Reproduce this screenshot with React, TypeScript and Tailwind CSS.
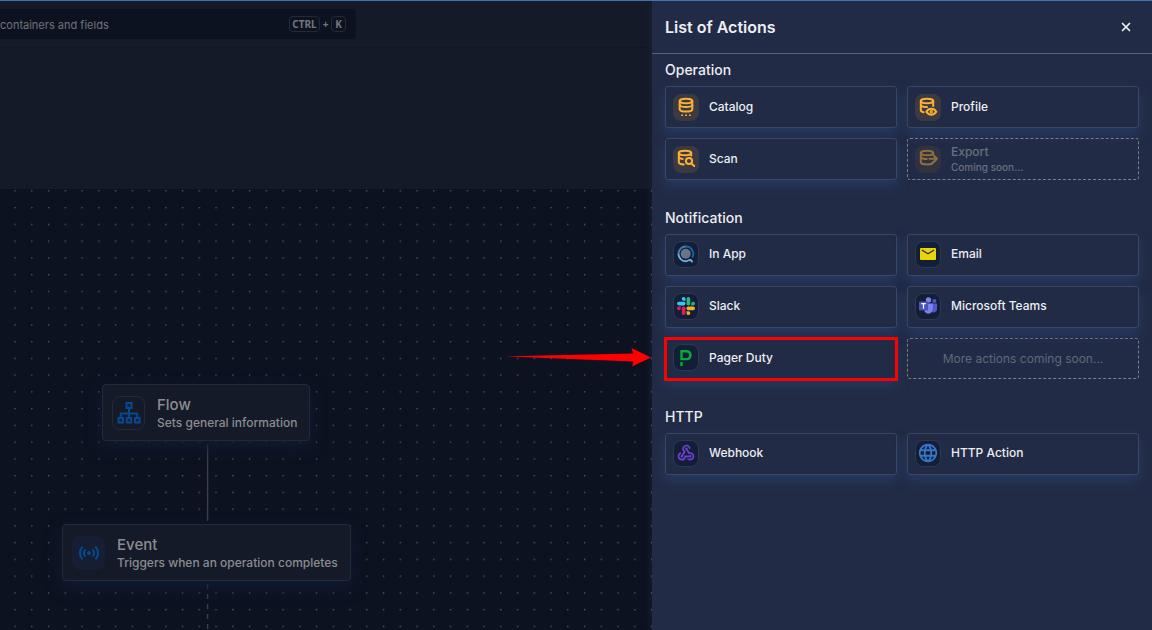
import type { ReactNode } from 'react';
import { X } from 'lucide-react';
import { MdLanguage, MdSensors, MdWebhook } from 'react-icons/md';

function DatabaseIcon({ kind }: { kind: 'catalog' | 'profile' | 'scan' | 'export' }) {
  return (
    <svg viewBox="0 0 20 20" className="h-5 w-5" fill="none" stroke="currentColor" strokeWidth="2" strokeLinecap="round" strokeLinejoin="round" aria-hidden="true">
      {kind === 'catalog' && (
        <>
          <ellipse cx="10" cy="4" rx="6.300" ry="2.300" />
          <path d="M3.700 4v8.200c0 1.400 2.800 2.400 6.300 2.400s6.300-1 6.300-2.400V4" />
          <path d="M3.700 8c.6 1.500 3.300 2.100 6.300 2.100S15.700 9.500 16.300 8" />
          <path d="M6 18.200h.3M9.900 18.200h.3M13.800 18.200h.3" strokeLinecap="square" strokeWidth="1.500" />
        </>
      )}
      {kind === 'profile' && (
        <>
          <ellipse cx="9" cy="4" rx="6.200" ry="2.300" />
          <path d="M2.800 4v9c0 1.100 1 1.900 2.800 2.300M2.800 8.200c1 1.300 3.500 1.900 6.200 1.900M15.200 4v5" />
          <path d="M8.300 14.800c1.300-2.100 3-3 5-3s3.700.9 5 3c-1.300 2-3 2.900-5 2.900s-3.700-.9-5-2.900z" />
          <circle cx="13.300" cy="14.800" r=".7" />
        </>
      )}
      {kind === 'scan' && (
        <>
          <ellipse cx="9" cy="4" rx="6.200" ry="2.300" />
          <path d="M2.800 4v9c0 1.300 2 2.300 5 2.500M2.800 8.200c.9 1.200 2.200 1.700 3.800 1.900M15.200 4v2.500" />
          <circle cx="13" cy="12" r="3.100" />
          <path d="m15.400 14.400 2.800 2.600" />
        </>
      )}
      {kind === 'export' && (
        <>
          <ellipse cx="9" cy="4" rx="6.200" ry="2.300" />
          <path d="M2.800 4v9c0 1.400 2.800 2.500 6.200 2.500s6.200-1.100 6.200-2.500M2.800 8.200c1 1.400 3.500 1.900 6 1.900M15.200 4v2" />
          <path d="M11.500 9.700H19m-3-3 3 3-3 3" />
        </>
      )}
    </svg>
  );
}

function InAppIcon() {
  return (
    <svg viewBox="0 0 18 18" className="h-[18px] w-[18px]" fill="none" aria-hidden="true">
      <circle cx="8.700" cy="8.700" r="5" fill="#687487" />
      <path d="M9 1.500a7.300 7.300 0 0 1 6.200 11" stroke="#17649c" strokeWidth="1.900" />
      <path d="M9 1.500A7.300 7.300 0 0 0 1.500 9" stroke="#3d7fb4" strokeWidth="1.900" />
      <path d="M1.500 8.700A7.300 7.300 0 0 0 9 16.200c1.800 0 2.900-1.600 4.500-1.200 1 .2 1.300 1 1.800 2.300" stroke="#6bb0e9" strokeWidth="1.900" />
    </svg>
  );
}

function SlackIcon() {
  return (
    <svg viewBox="0 0 18 18" className="h-[18px] w-[18px]" aria-hidden="true">
      <g fill="#36c5f0"><rect x="0" y="4.800" width="8.500" height="3.600" rx="1.800" /><path d="M8.500 3.700H6.700a1.850 1.850 0 1 1 1.800-1.850z" /></g>
      <g fill="#2eb67d"><rect x="9.600" y="0" width="3.600" height="8.500" rx="1.800" /><path d="M14.300 8.400V6.600a1.850 1.850 0 1 1 1.850 1.800z" /></g>
      <g fill="#ecb22e"><rect x="9.500" y="9.600" width="8.500" height="3.600" rx="1.800" /><path d="M9.600 14.300h1.800a1.850 1.850 0 1 1-1.800 1.850z" /></g>
      <g fill="#e01e5a"><rect x="4.800" y="9.500" width="3.600" height="8.500" rx="1.800" /><path d="M3.700 9.600v1.800a1.850 1.850 0 1 1-1.850-1.800z" /></g>
    </svg>
  );
}

function EmailIcon() {
  return (
    <svg viewBox="0 0 16 12" className="h-3 w-4" aria-hidden="true">
      <rect width="16" height="12" rx="1" fill="#ead40a" />
      <path d="m1.800 2 6.200 3.800L14.200 2" fill="none" stroke="#29304a" strokeWidth="1.400" />
    </svg>
  );
}

function TeamsIcon() {
  return (
    <svg viewBox="0 0 18 18" className="h-[18px] w-[18px]" aria-hidden="true">
      <circle cx="15.400" cy="4" r="2" fill="#5059c9" />
      <path d="M12 6.600h6v5.600a3.300 3.300 0 0 1-4.500 3z" fill="#5059c9" />
      <circle cx="9.500" cy="3" r="2.700" fill="#7b83eb" />
      <path d="M5.500 6.600h8.300v6a4.500 4.500 0 0 1-8.300 2z" fill="#7b83eb" />
      <rect x="0" y="4.400" width="9" height="9.200" rx="1" fill="#4b53bc" />
      <path d="M2.300 6.700h4.500M4.500 6.700v5" stroke="#fff" strokeWidth="1.200" />
    </svg>
  );
}

function PagerIcon() {
  return (
    <svg viewBox="0 0 12 16" className="h-4 w-3" fill="none" stroke="#06ac38" strokeWidth="2.400" aria-hidden="true">
      <path d="M1.500 10.300V1.200h5c2.600 0 4 1.500 4 3.900 0 2.500-1.500 4-4 4h-5" />
      <path d="M1.500 12v4" />
    </svg>
  );
}

function FlowIcon() {
  return (
    <svg viewBox="0 0 24 22" className="h-[22px] w-6" fill="none" stroke="currentColor" strokeWidth="2" aria-hidden="true">
      <rect x="9.500" y="1" width="5" height="5" />
      <rect x="1.500" y="16" width="4.500" height="4.500" />
      <rect x="9.750" y="16" width="4.500" height="4.500" />
      <rect x="18" y="16" width="4.500" height="4.500" />
      <path d="M12 6v10M3.750 16v-4.500h16.500V16" />
    </svg>
  );
}

interface Action {
  name: string;
  icon: ReactNode;
  amber?: boolean;
  note?: string;
  marked?: boolean;
}

const operations: Action[] = [
  { name: 'Catalog', icon: <DatabaseIcon kind="catalog" />, amber: true },
  { name: 'Profile', icon: <DatabaseIcon kind="profile" />, amber: true },
  { name: 'Scan', icon: <DatabaseIcon kind="scan" />, amber: true },
  { name: 'Export', icon: <DatabaseIcon kind="export" />, amber: true, note: 'Coming soon...' },
];

const notifications: Action[] = [
  { name: 'In App', icon: <InAppIcon /> },
  { name: 'Email', icon: <EmailIcon /> },
  { name: 'Slack', icon: <SlackIcon /> },
  { name: 'Microsoft Teams', icon: <TeamsIcon /> },
  { name: 'Pager Duty', icon: <PagerIcon />, marked: true },
];

const http: Action[] = [
  { name: 'Webhook', icon: <MdWebhook className="h-5 w-5 text-[#7042d8]" /> },
  { name: 'HTTP Action', icon: <MdLanguage className="h-[22px] w-[22px] text-[#3478c5]" /> },
];

function ActionCard({ action }: { action: Action }) {
  const disabled = Boolean(action.note);
  return (
    <button
      type="button"
      disabled={disabled}
      className={`relative flex items-center gap-2.5 rounded-[3px] border px-[7px] text-left ${
        action.marked ? 'h-[41px]' : 'h-[42px]'
      } ${action.amber ? '' : 'pb-0.5'} ${
        disabled ? 'border-dashed border-[#79808d]' : 'border-[#3c4661] bg-[#222b45] shadow-[0_6px_12px_#263a63]'
      }`}
    >
      <span
        className={`flex h-[27px] w-[26px] shrink-0 items-center justify-center rounded-lg ${
          action.amber ? 'bg-[#3b3a43] text-[#fcb132]' : 'border border-[#2d3852] bg-[#151e37]'
        } ${disabled ? 'opacity-50' : ''}`}
      >
        {action.icon}
      </span>
      <span className={`flex flex-col text-xs font-medium ${disabled ? 'text-[#696f80]' : 'text-[#eceef2]'}`}>
        {action.name}
        {action.note && <span className="text-[10px] leading-[14px]">{action.note}</span>}
      </span>
      {action.marked && (
        <span className="pointer-events-none absolute -inset-x-[2px] -top-[2px] -bottom-[3px] border-[3px] border-[#ff0000]" />
      )}
    </button>
  );
}

function Section({ title, actions, children }: { title: string; actions: Action[]; children?: ReactNode }) {
  return (
    <section>
      <h3 className="mb-1 text-sm leading-6 font-medium text-[#eceef2]">{title}</h3>
      <div className="grid grid-cols-2 gap-2.5">
        {actions.map((action) => (
          <ActionCard key={action.name} action={action} />
        ))}
        {children}
      </div>
    </section>
  );
}

function FlowNode({ title, text, icon, boxed }: { title: string; text: string; icon: ReactNode; boxed?: boolean }) {
  return (
    <div className="flex h-[57px] items-center gap-3 rounded-[4px] border border-[#22293a] bg-[#151a29] pr-3 pl-[9px] whitespace-nowrap text-[#8b8c8f] shadow-[0_6px_16px_#101b31]">
      <div className={`flex h-[34px] w-[33px] items-center justify-center rounded-lg text-[#054a91] ${boxed ? 'border border-[#22293a]' : 'bg-[#151e33]'}`}>
        {icon}
      </div>
      <div>
        <div className="text-[15px] leading-5 font-medium">{title}</div>
        <div className="text-xs font-medium">{text}</div>
      </div>
    </div>
  );
}

export default function App() {
  return (
    <div className="flex min-h-screen overflow-hidden border-t border-[#3f75b3] bg-[#0d1221] font-['Inter','Liberation_Sans',sans-serif]">
      <main className="flex min-w-0 flex-1 flex-col">
        <header className="flex h-[188px] flex-col bg-[#151a29]">
          <div className="border-b border-[#121725] py-2">
            <div className="flex h-[30px] w-[356px] items-center rounded-r-[4px] bg-[#0d1221] pr-2.5 text-[#74777d]">
              <input
                type="search"
                aria-label="Search containers and fields"
                placeholder="containers and fields"
                className="min-w-0 flex-1 bg-transparent pt-0.5 text-[11px] outline-none placeholder:text-[#707378]"
              />
              <div className="flex items-center gap-[3px] font-['Noto_Sans',sans-serif] text-[10px] leading-[14px] font-bold">
                <kbd className="rounded-[4px] border border-[#242936] px-[2px] font-['Noto_Sans',sans-serif]">CTRL</kbd>
                <span>+</span>
                <kbd className="rounded-[4px] border border-[#242936] px-[3px] font-['Noto_Sans',sans-serif]">K</kbd>
              </div>
            </div>
          </div>
        </header>

        <div className="relative flex-1 overflow-hidden">
          <svg className="absolute inset-0 h-full w-full" aria-hidden="true">
            <defs>
              <pattern id="dots" x="14.400" y="1.200" width="16.750" height="16.750" patternUnits="userSpaceOnUse">
                <circle cx=".7" cy=".7" r=".7" fill="#666970" />
              </pattern>
            </defs>
            <rect width="100%" height="100%" fill="url(#dots)" />
            <path d="M207.600 255v77" stroke="#3c404a" strokeWidth="1.400" />
            <path d="M207.600 395v60" stroke="#3c404a" strokeWidth="1.400" strokeDasharray="5 5" />
          </svg>
          <div className="absolute top-[195px] left-[102px]">
            <FlowNode title="Flow" text="Sets general information" icon={<FlowIcon />} boxed />
          </div>
          <div className="absolute top-[335px] left-[62px]">
            <FlowNode title="Event" text="Triggers when an operation completes" icon={<MdSensors className="h-6 w-6" />} />
          </div>
          <svg viewBox="0 0 148 20" className="absolute top-[158px] right-0 h-5 w-[148px]" aria-hidden="true">
            <path d="M0 9.300 129 6.500l-1.500-5.500L147 10.500l-19 9 1.500-5z" fill="#ff0000" />
          </svg>
        </div>
      </main>

      <aside className="w-[500px] shrink-0 bg-[#222b45] shadow-[0_0_8px_#19243b]">
        <header className="flex h-[53px] items-center justify-between border-b border-[#59627c] pr-[19px] pl-[13px] text-[#eceef2]">
          <h2 className="text-base font-semibold">List of Actions</h2>
          <button type="button" aria-label="Close">
            <X className="h-3.5 w-3.5" strokeWidth={3} />
          </button>
        </header>
        <div className="flex flex-col gap-[26px] px-[13px] pt-1 pb-6">
          <Section title="Operation" actions={operations} />
          <Section title="Notification" actions={notifications}>
            <div className="flex h-[41px] items-center justify-center rounded-[3px] border border-dashed border-[#79808d] text-xs text-[#606779]">
              More actions coming soon...
            </div>
          </Section>
          <Section title="HTTP" actions={http} />
        </div>
      </aside>
    </div>
  );
}
